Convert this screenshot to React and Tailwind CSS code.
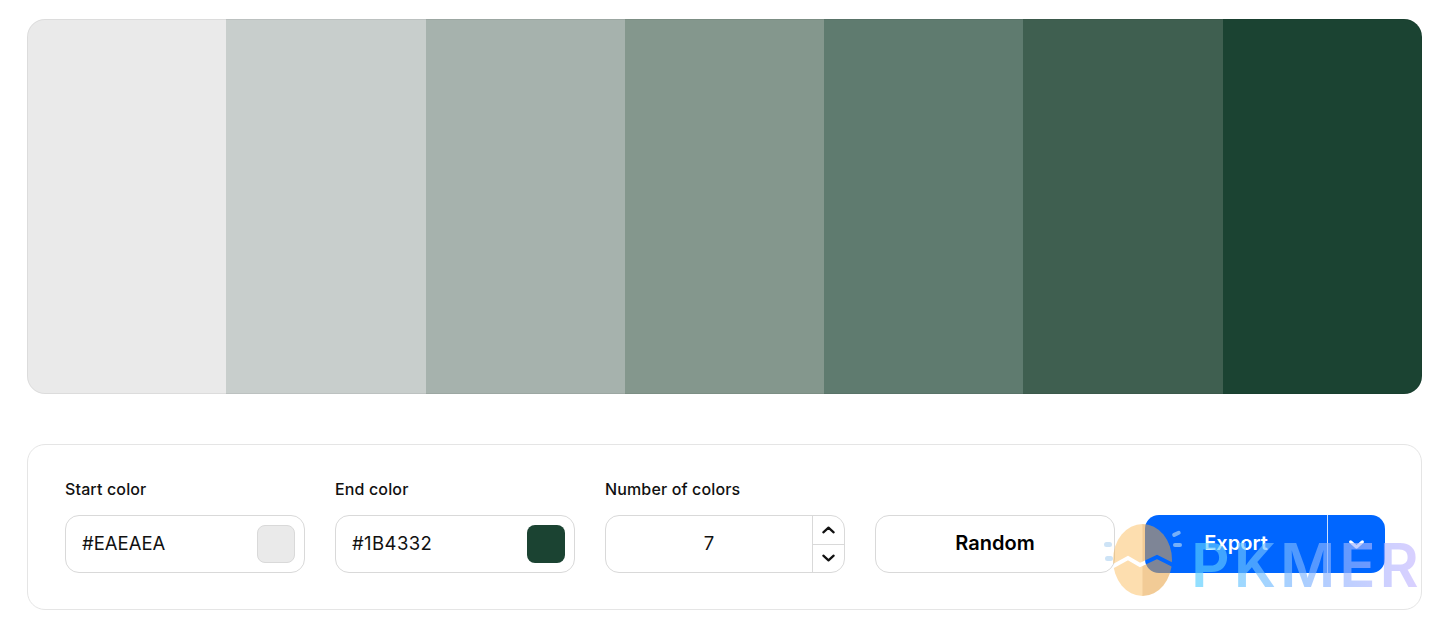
import React from "react";

const colors = ["bg-[#eaeaea]", "bg-[#c8cecc]", "bg-[#a6b2ad]", "bg-[#84978d]", "bg-[#5f7b6f]", "bg-[#3f5f50]", "bg-[#1b4332]"];

function Chevron({ up, className, sw = 2.4 }) {
  return (
    <svg viewBox="0 0 16 10" className={className} fill="none" stroke="currentColor" strokeWidth={sw} strokeLinecap="round" strokeLinejoin="round">
      <path d={up ? "M2.5 7.5 8 2.5l5.5 5" : "M2.5 2.5 8 7.5l5.5-5"} />
    </svg>
  );
}

function ColorField({ label, value, swatch, valueClass }) {
  return (
    <div className="flex flex-col w-[240px]">
      <label className="text-[16px] leading-5 font-medium tracking-[0.14px] text-[#111] mb-[16px]">{label}</label>
      <div className="h-[58px] rounded-[14px] border border-[#d9d9d9] flex items-center justify-between pl-[16px] pr-[9px] bg-white">
        <span className={`text-[18.5px] text-[#111] pb-[1px] ${valueClass}`}>{value}</span>
        <span className={`w-[38px] h-[38px] rounded-[8px] ${swatch}`} />
      </div>
    </div>
  );
}

export default function App() {
  return (
    <div className="relative w-[1446px] h-[634px] bg-white overflow-hidden px-[27px] pt-[19px] font-['Inter',sans-serif]">
      <div className="flex h-[375px] w-[1395px] rounded-[18px] overflow-hidden outline outline-1 -outline-offset-1 outline-black/[0.06]">
        {colors.map((c) => (
          <div key={c} className={`flex-1 ${c}`} />
        ))}
      </div>

      <div className="mt-[50px] h-[166px] w-[1395px] rounded-[18px] border border-[#e5e5e5] pl-[37px] pt-[34px] flex gap-[30px]">
        <ColorField label="Start color" value="#EAEAEA" valueClass="tracking-normal" swatch="bg-[#eaeaea] border border-[#d9d9d9]" />
        <ColorField label="End color" value="#1B4332" valueClass="tracking-[0.4px]" swatch="bg-[#1b4332]" />

        <div className="flex flex-col w-[240px]">
          <label className="text-[16px] leading-5 font-medium tracking-[0.14px] text-[#111] mb-[16px]">Number of colors</label>
          <div className="h-[58px] rounded-[14px] border border-[#d9d9d9] flex overflow-hidden">
            <div className="flex-1 flex items-center justify-center text-[18.5px] text-[#111] pb-[1px]">7</div>
            <div className="w-[32px] border-l border-[#d9d9d9] flex flex-col">
              <button className="flex-1 flex items-center justify-center text-[#111] border-b border-[#d9d9d9]">
                <Chevron up className="w-[15px] h-[10px]" />
              </button>
              <button className="flex-1 flex items-center justify-center text-[#111]">
                <Chevron className="w-[15px] h-[10px]" />
              </button>
            </div>
          </div>
        </div>

        <div className="flex flex-col justify-end w-[240px] pb-[36px]">
          <button className="h-[58px] rounded-[14px] border border-[#d9d9d9] text-[20px] font-semibold text-black pb-[2px]">Random</button>
        </div>

        <div className="flex flex-col justify-end w-[240px] pb-[36px]">
          <div className="h-[58px] rounded-[14px] bg-[#0066ff] flex text-white">
            <button className="w-[182px] text-[20px] font-semibold pb-[2px]">Export</button>
            <div className="w-px bg-white/80" />
            <button className="flex-1 flex items-center justify-center">
              <Chevron className="w-[17px] h-[11px]" sw={3} />
            </button>
          </div>
        </div>
      </div>

      <div className="absolute left-[1102px] top-[524px] w-[320px] h-[76px] pointer-events-none">
        <svg viewBox="0 0 80 76" className="absolute left-0 top-0 w-[80px] h-[76px] blur-[0.7px]">
          <defs>
            <mask id="gap">
              <rect width="80" height="76" fill="white" />
              <path d="M6 45 26 34l12 7 17-8 20 10" fill="none" stroke="black" strokeWidth="4" />
            </mask>
          </defs>
          <g mask="url(#gap)">
            <ellipse cx="40.5" cy="36" rx="29.5" ry="36" fill="#fbb040" fillOpacity="0.42" />
            <path d="M40.5 0a29.5 36 0 0 1 0 72z" fill="#c98a3a" fillOpacity="0.22" />
          </g>
          <rect x="2" y="18" width="8" height="5" rx="2.5" fill="#9cc7ee" fillOpacity="0.5" />
          <rect x="3" y="32" width="8" height="5" rx="2.5" fill="#9cc7ee" fillOpacity="0.5" />
          <rect x="70" y="8" width="9" height="4" rx="2" fill="#a9d0f5" fillOpacity="0.7" transform="rotate(-25 74 10)" />
          <rect x="71" y="19" width="9" height="4" rx="2" fill="#a9d0f5" fillOpacity="0.7" />
        </svg>
        <div className="absolute left-[89px] top-[11px] text-[60px] leading-[60px] font-semibold tracking-[4px] text-transparent bg-clip-text bg-gradient-to-r from-[#55d0ff] via-[#7fb4ff] to-[#c9b8ff] opacity-65 blur-[0.6px]">
          PKMER
        </div>
      </div>
    </div>
  );
}
